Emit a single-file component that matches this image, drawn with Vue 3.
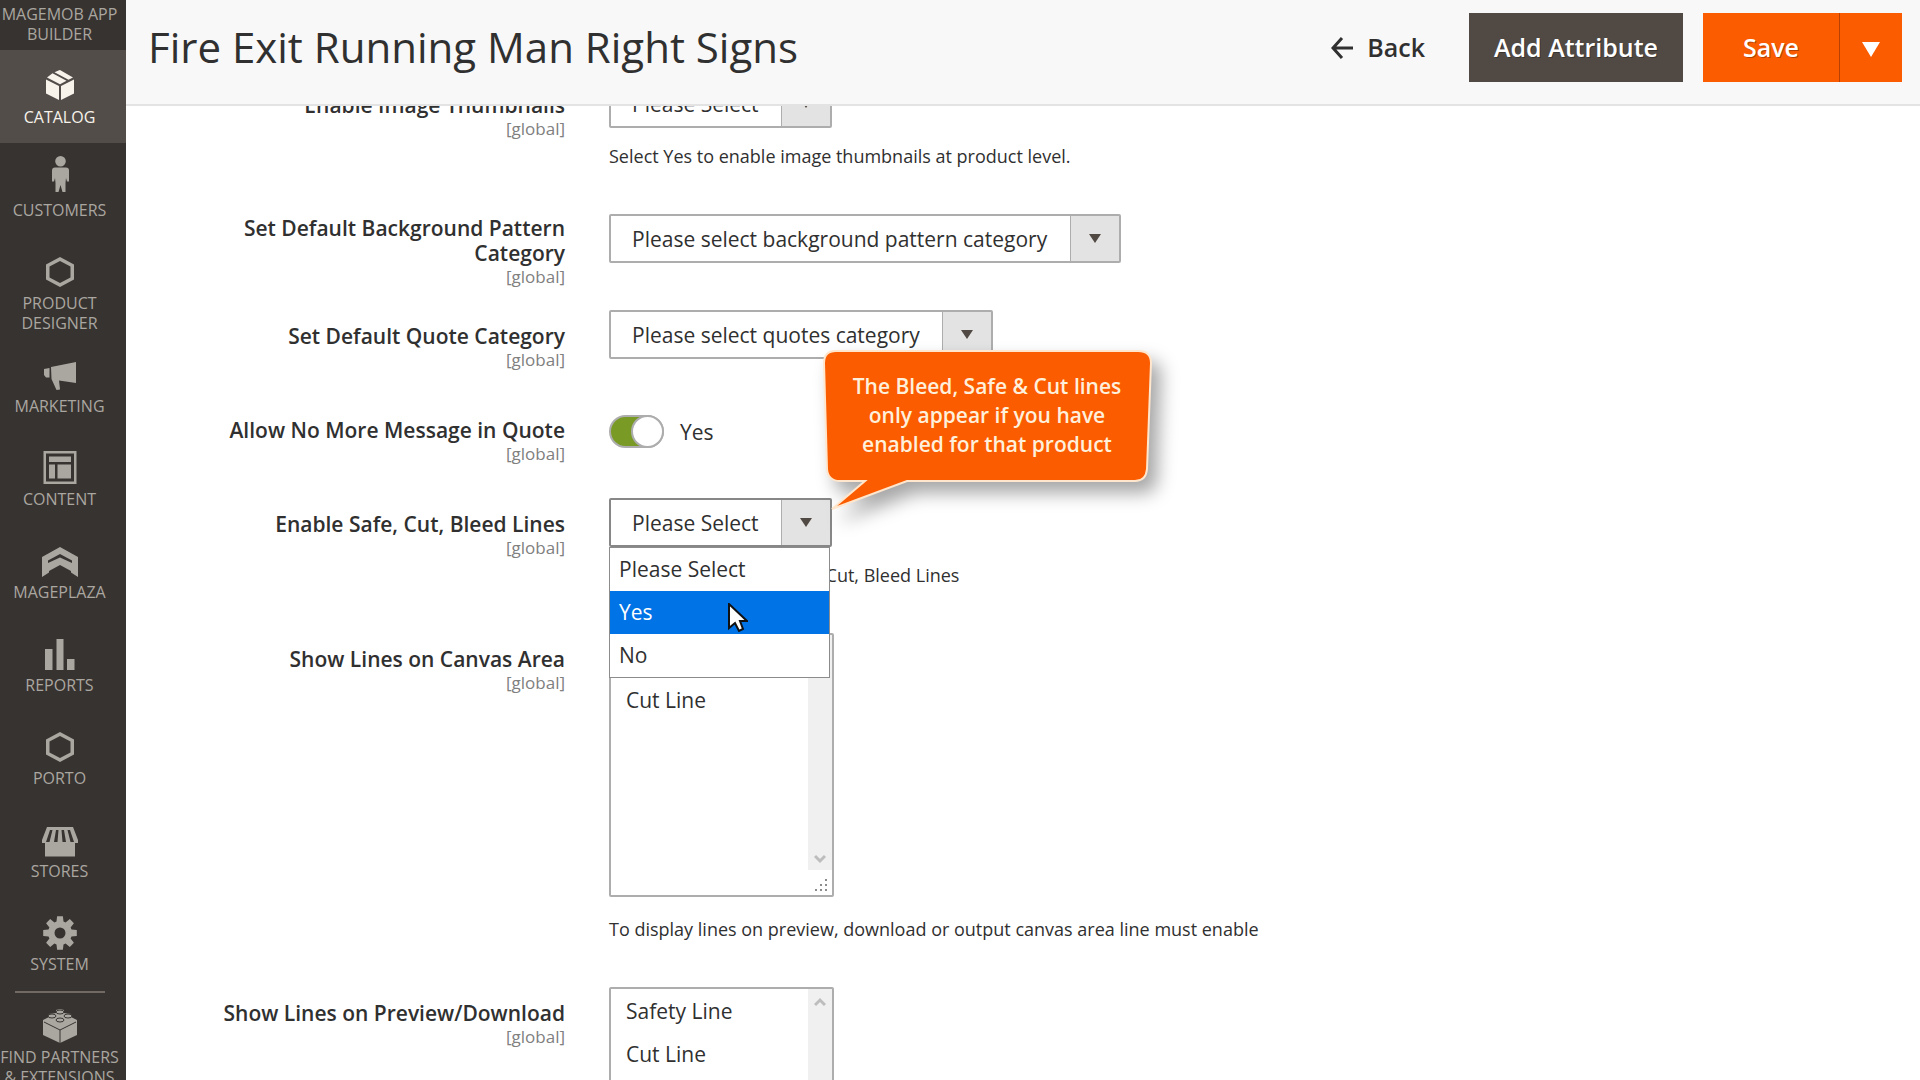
<template>
  <div class="admin">
    <aside class="sidebar">
      <nav class="menu" aria-label="Main menu">
        <a
          v-for="item in menuItems"
          :key="item.name"
          href="#"
          class="menu-item"
          :class="{ active: item.name === activeMenu, separated: item.separated }"
          @click.prevent="activeMenu = item.name"
        >
          <svg class="menu-icon" viewBox="0 0 40 42" aria-hidden="true">
            <path :d="icons[item.icon]" fill="currentColor" fill-rule="evenodd" />
            <path v-if="item.icon === 'brick'" d="M4 20L20 28L36 20M20 28V41" class="icon-gap" />
            <g v-if="item.icon === 'brick'" class="studs">
              <ellipse cx="20" cy="10" rx="4" ry="2" />
              <ellipse cx="12" cy="14" rx="4" ry="2" />
              <ellipse cx="28" cy="14" rx="4" ry="2" />
              <ellipse cx="20" cy="18" rx="4" ry="2" />
            </g>
          </svg>
          <span class="menu-label">{{ item.name }}</span>
        </a>
      </nav>
    </aside>

    <main class="page">
      <header class="page-header">
        <h1>Fire Exit Running Man Right Signs</h1>
        <div class="page-actions">
          <button type="button" class="btn-back">
            <svg width="22" height="22" viewBox="0 0 22 22" aria-hidden="true">
              <path d="M11 1L2 11L11 21M2 11H22" fill="none" stroke="currentColor" stroke-width="3" />
            </svg>
            Back
          </button>
          <button type="button" class="btn btn-secondary">Add Attribute</button>
          <div class="btn-split">
            <button type="button" class="btn btn-primary">Save</button>
            <button type="button" class="btn btn-primary btn-toggle" aria-label="More save options">
              <svg width="18" height="15" viewBox="0 0 18 15" aria-hidden="true">
                <path d="M0 0H18L9 15Z" fill="currentColor" />
              </svg>
            </button>
          </div>
        </div>
      </header>

      <div class="content">
        <form class="form" @submit.prevent>
          <div
            v-for="field in fields"
            :key="field.id"
            class="field"
            :class="{ 'has-note': field.note, 'two-lines': field.twoLines }"
          >
            <div class="field-label">
              <label :for="field.id">{{ field.label }}</label>
              <span class="scope">[global]</span>
            </div>

            <div class="field-control">
              <div v-if="field.type === 'select'" class="select-box">
                <select :id="field.id" class="select" :class="{ open: field.open }">
                  <option>{{ field.value }}</option>
                </select>

                <template v-if="field.open">
                  <ul class="options" role="listbox" :aria-label="field.label">
                    <li
                      v-for="option in field.options"
                      :key="option"
                      role="option"
                      :aria-selected="option === hovered"
                      :class="{ hovered: option === hovered }"
                      @mouseenter="hovered = option"
                    >
                      {{ option }}
                    </li>
                  </ul>

                  <div class="callout">
                    <svg class="callout-shape" viewBox="0 0 330 162" aria-hidden="true">
                      <path d="M14 2H316Q329 2 329 14L325 120Q324 132 313 132H85L10 160L43 132H18Q6 132 5 120L2 14Q2 2 14 2Z" />
                    </svg>
                    <p>The Bleed, Safe &amp; Cut lines<br>only appear if you have<br>enabled for that product</p>
                  </div>

                  <svg class="cursor" width="20" height="30" viewBox="0 0 20 30" aria-hidden="true">
                    <path d="M1 1V25L7 20L11 28L15 26L12 18H19Z" fill="#fff" stroke="#111" stroke-width="2" />
                  </svg>
                </template>
              </div>

              <div v-else-if="field.type === 'toggle'" class="toggle">
                <input :id="field.id" v-model="allowMessage" type="checkbox" class="toggle-input">
                <label :for="field.id">{{ allowMessage ? 'Yes' : 'No' }}</label>
              </div>

              <div v-else class="multiselect">
                <select :id="field.id" multiple>
                  <option v-for="option in field.options" :key="option">{{ option }}</option>
                </select>
                <div class="scroll" aria-hidden="true">
                  <div class="scroll-track">
                    <svg width="12" height="10" viewBox="0 0 12 10"><path d="M1 8L6 3L11 8" /></svg>
                    <svg width="12" height="10" viewBox="0 0 12 10"><path d="M1 2L6 7L11 2" /></svg>
                  </div>
                  <svg class="resizer" width="13" height="13" viewBox="0 0 13 13">
                    <path d="M10 0h2v2h-2zM5 5h2v2h-2zM10 5h2v2h-2zM0 10h2v2h-2zM5 10h2v2h-2zM10 10h2v2h-2z" />
                  </svg>
                </div>
              </div>

              <p v-if="field.note" class="note">{{ field.note }}</p>
            </div>
          </div>
        </form>
      </div>
    </main>
  </div>
</template>

<script setup>
import { ref } from 'vue'

const activeMenu = ref('Catalog')
const allowMessage = ref(true)
const hovered = ref('Yes')

const menuItems = [
  { name: 'Magemob App Builder', icon: 'hexagon' },
  { name: 'Catalog', icon: 'box' },
  { name: 'Customers', icon: 'person' },
  { name: 'Product Designer', icon: 'hexagon' },
  { name: 'Marketing', icon: 'megaphone' },
  { name: 'Content', icon: 'layout' },
  { name: 'Mageplaza', icon: 'mageplaza' },
  { name: 'Reports', icon: 'bars' },
  { name: 'Porto', icon: 'hexagon' },
  { name: 'Stores', icon: 'store' },
  { name: 'System', icon: 'gear' },
  { name: 'Find Partners & Extensions', icon: 'brick', separated: true }
]

// eight teeth around a ring, centred in the icon box
const gearPath = () => {
  const points = []
  for (let i = 0; i < 8; i++) {
    const shape = [[-0.3, 12], [-0.17, 17], [0.17, 17], [0.3, 12]]
    shape.forEach(([offset, radius]) => {
      const angle = (i * Math.PI) / 4 + offset
      points.push(`${(20 + radius * Math.sin(angle)).toFixed(1)} ${(24 - radius * Math.cos(angle)).toFixed(1)}`)
    })
  }
  return `M${points.join('L')}ZM20 18.5a5.5 5.5 0 1 0 0 11a5.5 5.5 0 1 0 0-11Z`
}

const icons = {
  hexagon: 'M20 9L34 16.5V31.5L20 39L6 31.5V16.5ZM20 13L9.5 18.5V29.5L20 35L30.5 29.5V18.5Z',
  box: 'M18.5 8.5L20 8L33 15.5L28.5 17.8L14.5 10.3ZM12.5 11.3L26.5 18.8L20 22.2L7 15.5ZM6 17.5L19 24V38L6 31.5ZM34 17.5L21 24V38L34 31.5Z',
  person: 'M20.5 1a5.3 5.3 0 1 1 0 10.6a5.3 5.3 0 1 1 0-10.6ZM15 12.5H26Q29 12.5 29 15.5V26.5H27L26 23L25.5 28V37H22.5L20.5 30L18.5 37H15.5V28L15 23L14 26.5H12V15.5Q12 12.5 15 12.5Z',
  megaphone: 'M11 16L36 11V32L19 29.5L20 38.5L16.5 39L11.5 28ZM4 18L9.5 17V26.5H6L4 24Z',
  layout: 'M3.5 7H36.5V40H3.5ZM6 9.5V37.5H34V9.5ZM9 12.5H31V18H9ZM9 20.5H15V34.5H9ZM17.5 20.5H31V34.5H17.5Z',
  mageplaza: 'M20 10L38 20V40L31 35.5V34L20 28L9 34V35.5L2 40V20ZM20 17L8 23.5V26L20 20.5L32 26V23.5Z',
  bars: 'M5 19H12.5V40H5ZM16.5 9H23.5V40H16.5ZM27 29H34.5V40H27Z',
  store: 'M7 11H33L38 24V27H35V40.5H5V27H2V24ZM10 14L6 26H9.5L12.5 14ZM16 14L14 26H17.5L18.5 14ZM21.5 14L22.5 26H26L24 14ZM27.5 14L30.5 26H34L30 14Z',
  gear: gearPath(),
  brick: 'M3 18L9 15V12L16 11V8L20 7L24 8V11L31 12V15L37 18V33L20 41L3 33Z'
}

const fields = [
  {
    id: 'image-thumbnails',
    type: 'select',
    label: 'Enable Image Thumbnails',
    value: 'Please Select',
    note: 'Select Yes to enable image thumbnails at product level.'
  },
  {
    id: 'background-category',
    type: 'select',
    label: 'Set Default Background Pattern Category',
    value: 'Please select background pattern category',
    twoLines: true
  },
  {
    id: 'quote-category',
    type: 'select',
    label: 'Set Default Quote Category',
    value: 'Please select quotes category'
  },
  {
    id: 'no-more-message',
    type: 'toggle',
    label: 'Allow No More Message in Quote'
  },
  {
    id: 'enable-lines',
    type: 'select',
    label: 'Enable Safe, Cut, Bleed Lines',
    value: 'Please Select',
    open: true,
    options: ['Please Select', 'Yes', 'No'],
    note: 'Select Yes to enable Safe, Cut, Bleed Lines'
  },
  {
    id: 'canvas-lines',
    type: 'multiselect',
    label: 'Show Lines on Canvas Area',
    options: ['Safety Line', 'Cut Line'],
    note: 'To display lines on preview, download or output canvas area line must enable'
  },
  {
    id: 'preview-lines',
    type: 'multiselect',
    label: 'Show Lines on Preview/Download',
    options: ['Safety Line', 'Cut Line']
  }
]
</script>

<style>
body {
  overflow: hidden;
}
</style>

<style scoped>
.admin {
  display: flex;
  height: 100vh;
  overflow: hidden;
  background: #fff;
  color: #303030;
  font-family: 'Open Sans', 'Noto Sans', sans-serif;
  font-size: 21px;
}

.admin *,
.admin *::before {
  box-sizing: border-box;
}

button,
select {
  font-family: inherit;
  font-size: inherit;
  color: inherit;
}

/* sidebar */
.sidebar {
  flex: 0 0 126px;
  background: #373330;
  overflow: hidden;
}

.menu {
  display: flex;
  flex-direction: column;
  margin-top: -53px;
}

.menu-item {
  position: relative;
  display: flex;
  flex-direction: column;
  align-items: center;
  gap: 3px;
  min-height: 93px;
  padding: 12px 7px 6px 0;
  color: #aaa6a0;
  font-size: 16px;
  line-height: 20px;
  text-align: center;
  text-decoration: none;
  text-transform: uppercase;
}

.menu-item.active {
  background: #524d49;
  color: #f7f3eb;
}

.menu-item.separated::before {
  content: '';
  position: absolute;
  top: 1px;
  left: 15px;
  width: 90px;
  height: 2px;
  background: #736963;
}

.menu-icon {
  flex: none;
  width: 40px;
  height: 42px;
}

.icon-gap,
.studs {
  fill: none;
  stroke: #373330;
  stroke-width: 1;
}

.studs {
  fill: #aaa6a0;
}

/* header */
.page {
  flex: 1;
  min-width: 0;
  display: flex;
  flex-direction: column;
}

.page-header {
  flex: none;
  display: flex;
  align-items: center;
  justify-content: space-between;
  padding: 13px 18px 22px 22px;
  background: #f8f8f8;
  border-bottom: 2px solid #e3e3e3;
}

h1 {
  margin: 0;
  padding-bottom: 2px;
  font-size: 42px;
  line-height: 50px;
  font-weight: 400;
}

.page-actions {
  display: flex;
  align-items: center;
  gap: 20px;
}

.page-actions button {
  border: 0;
  font-size: 25px;
  line-height: 33px;
  font-weight: 600;
  cursor: pointer;
}

.btn-back {
  display: flex;
  align-items: center;
  gap: 14px;
  padding: 18px 24px;
  background: none;
}

.btn {
  padding: 18px 25px;
  color: #fff;
  text-shadow: 1px 1px 0 rgba(0, 0, 0, 0.3);
}

.btn-secondary {
  background: #514943;
}

.btn-split {
  display: flex;
}

.page-actions .btn-primary {
  padding: 18px 40px;
  background: #fb5c00;
}

.page-actions .btn-toggle {
  padding: 18px 22px;
  border-left: 1px solid #b84002;
}

/* form */
.content {
  flex: 1;
  min-height: 0;
  overflow: hidden;
}

.form {
  margin-top: -27px;
}

.field {
  display: grid;
  grid-template-columns: 439px 1fr;
  column-gap: 44px;
  margin-bottom: 34px;
}

.field.has-note {
  margin-bottom: 46px;
}

.field.two-lines {
  margin-bottom: 23px;
}

.field-label {
  display: flex;
  flex-direction: column;
  padding: 14px 0 0 80px;
  text-align: right;
}

.two-lines .field-label {
  padding-top: 2px;
}

.field-label label {
  font-weight: 600;
  line-height: 25px;
}

.scope {
  color: #808080;
  font-size: 17px;
  line-height: 21px;
}

.select-box {
  position: relative;
  width: fit-content;
}

.select {
  display: block;
  height: 49px;
  padding: 0 71px 0 21px;
  border: 2px solid #adadad;
  border-radius: 2px;
  appearance: none;
  background-color: #fff;
  background-image:
    url("data:image/svg+xml,%3Csvg xmlns='http://www.w3.org/2000/svg' width='12' height='9'%3E%3Cpath d='M0 0H12L6 9Z' fill='%23514943'/%3E%3C/svg%3E"),
    linear-gradient(#adadad, #adadad),
    linear-gradient(#e3e3e3, #e3e3e3);
  background-position: right 18px center, right 48px top, right top;
  background-size: 12px 9px, 1px 100%, 48px 100%;
  background-repeat: no-repeat;
}

.select.open {
  border-color: #878787;
}

.options {
  position: absolute;
  z-index: 2;
  top: 49px;
  left: 0;
  right: 2px;
  margin: 0;
  padding: 0;
  border: 1px solid #8c8c8c;
  background: #fff;
  list-style: none;
}

.options li {
  padding: 0 9px;
  line-height: 43px;
}

.options .hovered {
  background: #0073e6;
  color: #fff;
}

.callout {
  position: absolute;
  z-index: 3;
  top: -149px;
  left: 213px;
  width: 330px;
  height: 162px;
}

.callout-shape {
  position: absolute;
  inset: 0;
  overflow: visible;
  fill: #fb5c00;
  stroke: #ffe6cc;
  stroke-width: 2;
  filter: drop-shadow(9px 11px 9px rgba(0, 0, 0, 0.35));
}

.callout p {
  position: relative;
  margin: 0;
  padding-top: 23px;
  color: #fff0dc;
  font-size: 21px;
  line-height: 29px;
  font-weight: 600;
  text-align: center;
  white-space: nowrap;
}

.cursor {
  position: absolute;
  z-index: 4;
  top: 105px;
  left: 119px;
}

.toggle {
  display: flex;
  align-items: center;
  gap: 16px;
  padding-top: 11px;
}

.toggle-input {
  position: relative;
  width: 55px;
  height: 33px;
  margin: 0;
  border: 2px solid #adadad;
  border-radius: 17px;
  appearance: none;
  background: #e3e3e3;
}

.toggle-input:checked {
  background: #7a9a26;
}

.toggle-input::before {
  content: '';
  position: absolute;
  top: -2px;
  left: -2px;
  width: 33px;
  height: 33px;
  border: 2px solid #adadad;
  border-radius: 50%;
  background: #fff;
}

.toggle-input:checked::before {
  left: 20px;
}

.multiselect {
  display: flex;
  width: 225px;
  height: 264px;
  margin-bottom: 4px;
  border: 2px solid #adadad;
  border-radius: 2px;
  background: #fff;
}

.multiselect select {
  flex: 1;
  min-width: 0;
  padding: 0;
  border: 0;
  outline: 0;
  background: none;
  overflow: hidden;
}

.multiselect option {
  min-height: 43px;
  padding: 8px 15px 6px;
  line-height: 29px;
}

.scroll {
  display: flex;
  flex-direction: column;
  width: 24px;
}

.scroll-track {
  flex: 1;
  display: flex;
  flex-direction: column;
  align-items: center;
  justify-content: space-between;
  padding: 8px 0 6px;
  background: #f0f0f0;
}

.scroll-track path {
  fill: none;
  stroke: #bdbdbd;
  stroke-width: 3;
}

.resizer {
  margin: 9px 0 3px 7px;
  fill: #8c8c8c;
}

.note {
  margin: 0;
  padding-top: 16px;
  font-size: 18px;
  line-height: 24px;
}
</style>
